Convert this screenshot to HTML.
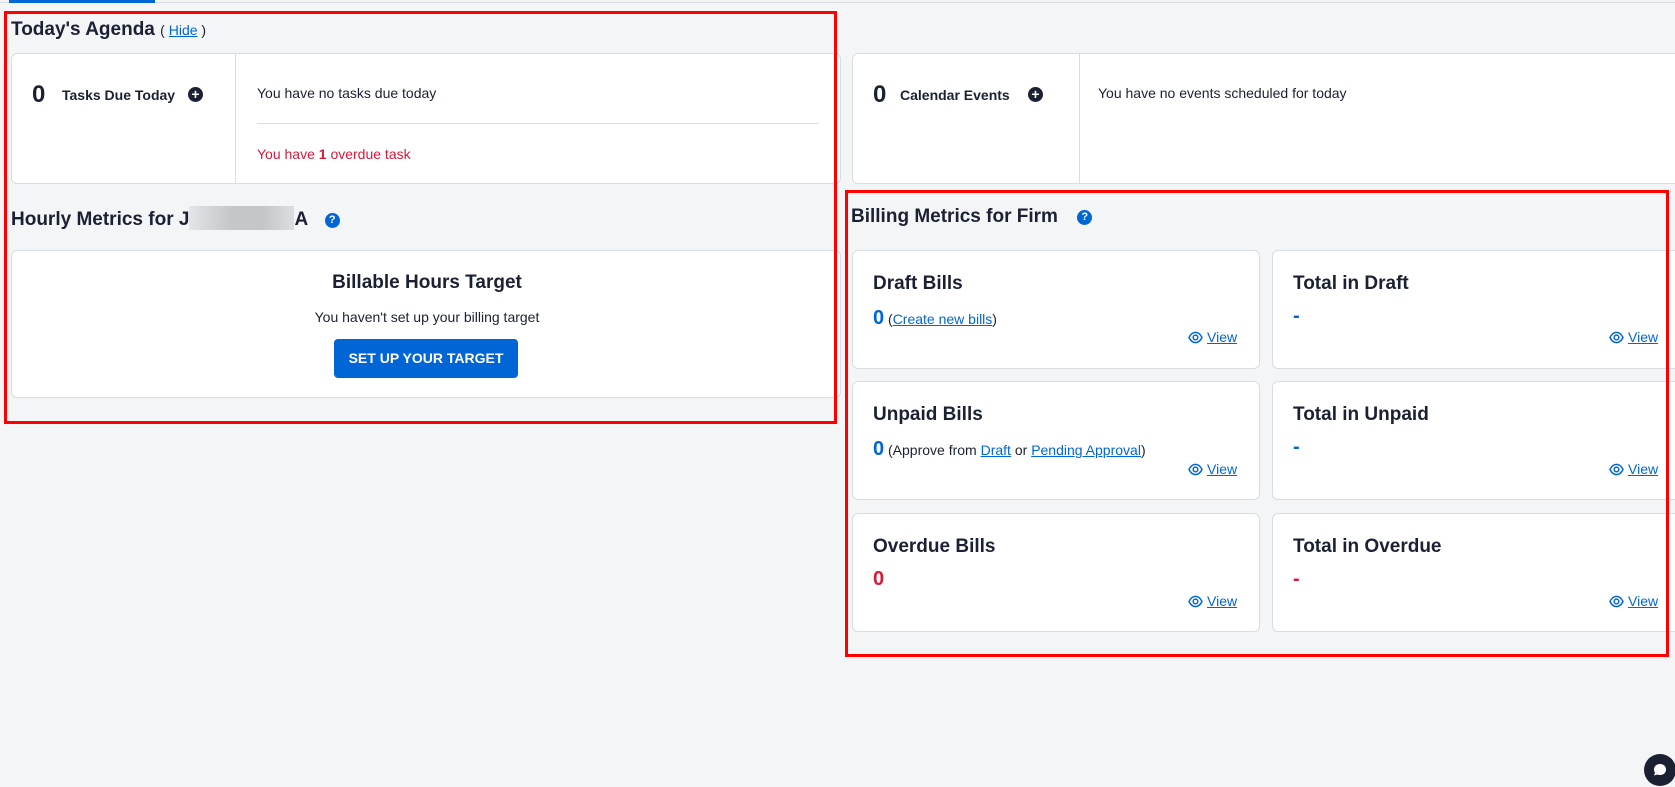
<!DOCTYPE html>
<html><head><meta charset="utf-8"><style>
*{box-sizing:border-box;margin:0;padding:0}
body{width:1675px;height:787px;background:#f4f5f7;font-family:"Liberation Sans",sans-serif;color:#1b2133;position:relative;overflow:hidden}
.a{position:absolute}
.card{position:absolute;background:#fff;border:1px solid #d8dde3;border-radius:6px}
.red{position:absolute;border:3px solid #f00}
.blue{color:#0066d6}
u{color:#0066d6}
.h{font-weight:bold;font-size:19px;white-space:nowrap}
.q{display:inline-block;width:15px;height:15px;border-radius:50%;background:#0066d6;color:#fff;font-size:11px;font-weight:bold;text-align:center;line-height:15px}
.t{font-size:19px;font-weight:bold}
.v{font-size:14px;color:#0066d6;text-decoration:underline}
.eye{display:inline-block;vertical-align:-2px;margin-right:4px}
</style></head><body>
<div class="a" style="left:0;top:2px;width:1675px;height:1px;background:#d8dde3"></div>
<div class="a" style="left:9px;top:0;width:146px;height:3px;background:#0066d6"></div>

<div class="a h" style="left:11px;top:19px">Today's Agenda <span style="font-weight:normal;font-size:14px">( <u>Hide</u> )</span></div>

<div class="card" style="left:11px;top:53px;width:830px;height:131px">
 <div class="a" style="left:223px;top:0;width:1px;height:130px;background:#d8dde3"></div>
 <div class="a" style="left:20px;top:27px;font-size:24px;font-weight:bold">0</div>
 <div class="a" style="left:50px;top:33px;font-size:14px;font-weight:bold">Tasks Due Today</div>
 <div class="a" style="left:176px;top:33px;width:15px;height:15px;border-radius:50%;background:#1b2133;color:#fff;font-size:14px;font-weight:bold;text-align:center;line-height:15px">+</div>
 <div class="a" style="left:245px;top:31px;font-size:14px">You have no tasks due today</div>
 <div class="a" style="left:245px;top:69px;width:562px;height:1px;background:#d8dde3"></div>
 <div class="a" style="left:245px;top:92px;font-size:14px;color:#d7193a">You have <b>1</b> overdue task</div>
</div>

<div class="card" style="left:852px;top:53px;width:840px;height:131px">
 <div class="a" style="left:226px;top:0;width:1px;height:130px;background:#d8dde3"></div>
 <div class="a" style="left:20px;top:27px;font-size:24px;font-weight:bold">0</div>
 <div class="a" style="left:47px;top:33px;font-size:14px;font-weight:bold">Calendar Events</div>
 <div class="a" style="left:175px;top:33px;width:15px;height:15px;border-radius:50%;background:#1b2133;color:#fff;font-size:14px;font-weight:bold;text-align:center;line-height:15px">+</div>
 <div class="a" style="left:245px;top:31px;font-size:14px">You have no events scheduled for today</div>
</div>

<div class="a h" style="left:11px;top:206px">Hourly Metrics for J<span style="display:inline-block;width:105px;height:24px;background:linear-gradient(90deg,#e4e5e6,#c4c6c8 40%,#c4c6c8 70%,#dcdddf);vertical-align:-5px"></span>A <span class="q" style="margin-left:12px;vertical-align:2px">?</span></div>

<div class="card" style="left:11px;top:250px;width:830px;height:148px;text-align:center">
 <div class="a" style="left:0;width:830px;top:21px;font-size:19px;font-weight:bold">Billable Hours Target</div>
 <div class="a" style="left:0;width:830px;top:58px;font-size:14px">You haven't set up your billing target</div>
 <div class="a" style="left:322px;top:88px;width:184px;height:39px;background:#0066d6;border-radius:4px;color:#fff;font-weight:bold;font-size:14px;line-height:39px">SET UP YOUR TARGET</div>
</div>

<div class="a h" style="left:851px;top:206px">Billing Metrics for Firm <span class="q" style="margin-left:14px;vertical-align:2px">?</span></div>

<div class="card" style="left:852px;top:250px;width:408px;height:119px">
 <div class="a t" style="left:20px;top:22px">Draft Bills</div>
 <div class="a" style="left:20px;top:56px;font-size:14px"><span class="blue" style="font-size:20px;font-weight:bold">0</span> (<u>Create new bills</u>)</div>
</div>
<div class="card" style="left:1272px;top:250px;width:420px;height:119px">
 <div class="a t" style="left:20px;top:22px">Total in Draft</div>
 <div class="a blue" style="left:20px;top:54px;font-size:20px;font-weight:bold">-</div>
</div>
<div class="card" style="left:852px;top:381px;width:408px;height:119px">
 <div class="a t" style="left:20px;top:22px">Unpaid Bills</div>
 <div class="a" style="left:20px;top:56px;font-size:14px"><span class="blue" style="font-size:20px;font-weight:bold">0</span> (Approve from <u>Draft</u> or <u>Pending Approval</u>)</div>
</div>
<div class="card" style="left:1272px;top:381px;width:420px;height:119px">
 <div class="a t" style="left:20px;top:22px">Total in Unpaid</div>
 <div class="a blue" style="left:20px;top:54px;font-size:20px;font-weight:bold">-</div>
</div>
<div class="card" style="left:852px;top:513px;width:408px;height:119px">
 <div class="a t" style="left:20px;top:22px">Overdue Bills</div>
 <div class="a" style="left:20px;top:54px;font-size:20px;font-weight:bold;color:#d7193a">0</div>
</div>
<div class="card" style="left:1272px;top:513px;width:420px;height:119px">
 <div class="a t" style="left:20px;top:22px">Total in Overdue</div>
 <div class="a" style="left:20px;top:54px;font-size:20px;font-weight:bold;color:#d7193a">-</div>
</div>

<div class="a v" style="left:1188px;top:329px"><svg class="eye" width="15" height="13" viewBox="0 0 16 14"><path d="M1 7C3 3 5.5 1.5 8 1.5S13 3 15 7C13 11 10.5 12.5 8 12.5S3 11 1 7Z" fill="none" stroke="#0066d6" stroke-width="1.6"/><circle cx="8" cy="7" r="2.5" fill="none" stroke="#0066d6" stroke-width="1.6"/></svg>View</div>
<div class="a v" style="left:1609px;top:329px"><svg class="eye" width="15" height="13" viewBox="0 0 16 14"><path d="M1 7C3 3 5.5 1.5 8 1.5S13 3 15 7C13 11 10.5 12.5 8 12.5S3 11 1 7Z" fill="none" stroke="#0066d6" stroke-width="1.6"/><circle cx="8" cy="7" r="2.5" fill="none" stroke="#0066d6" stroke-width="1.6"/></svg>View</div>
<div class="a v" style="left:1188px;top:461px"><svg class="eye" width="15" height="13" viewBox="0 0 16 14"><path d="M1 7C3 3 5.5 1.5 8 1.5S13 3 15 7C13 11 10.5 12.5 8 12.5S3 11 1 7Z" fill="none" stroke="#0066d6" stroke-width="1.6"/><circle cx="8" cy="7" r="2.5" fill="none" stroke="#0066d6" stroke-width="1.6"/></svg>View</div>
<div class="a v" style="left:1609px;top:461px"><svg class="eye" width="15" height="13" viewBox="0 0 16 14"><path d="M1 7C3 3 5.5 1.5 8 1.5S13 3 15 7C13 11 10.5 12.5 8 12.5S3 11 1 7Z" fill="none" stroke="#0066d6" stroke-width="1.6"/><circle cx="8" cy="7" r="2.5" fill="none" stroke="#0066d6" stroke-width="1.6"/></svg>View</div>
<div class="a v" style="left:1188px;top:593px"><svg class="eye" width="15" height="13" viewBox="0 0 16 14"><path d="M1 7C3 3 5.5 1.5 8 1.5S13 3 15 7C13 11 10.5 12.5 8 12.5S3 11 1 7Z" fill="none" stroke="#0066d6" stroke-width="1.6"/><circle cx="8" cy="7" r="2.5" fill="none" stroke="#0066d6" stroke-width="1.6"/></svg>View</div>
<div class="a v" style="left:1609px;top:593px"><svg class="eye" width="15" height="13" viewBox="0 0 16 14"><path d="M1 7C3 3 5.5 1.5 8 1.5S13 3 15 7C13 11 10.5 12.5 8 12.5S3 11 1 7Z" fill="none" stroke="#0066d6" stroke-width="1.6"/><circle cx="8" cy="7" r="2.5" fill="none" stroke="#0066d6" stroke-width="1.6"/></svg>View</div>

<div class="red" style="left:4px;top:11px;width:833px;height:413px"></div>
<div class="red" style="left:845px;top:190px;width:824px;height:467px"></div>

<svg class="a" style="left:1644px;top:754px" width="32" height="32" viewBox="0 0 32 32"><circle cx="16" cy="16" r="16" fill="#1b2133"/><path d="M10 15.5C10 12 12.7 10 16 10S22 12 22 15.5 19.3 21 16 21C15 21 14.2 20.8 13.5 20.5L10 21.5 11 18.5C10.4 17.6 10 16.6 10 15.5Z" fill="#fff"/></svg>
</body></html>
